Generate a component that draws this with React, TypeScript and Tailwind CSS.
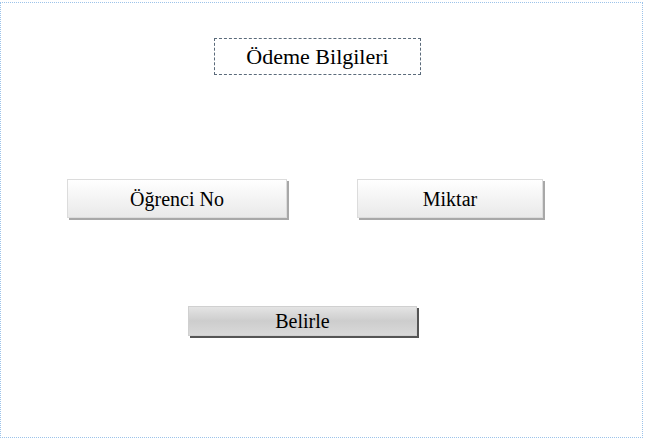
const App = () => {
    return (
        <div className="w-[646px] h-[439px] bg-white pt-[2px] font-['Liberation_Serif',serif] text-black">
            <div className="w-[643px] h-[436px] border border-dotted border-[#9cc3ea] flex flex-col">
                {/* title */}
                <div className="ml-[213px] mt-[35px] w-[207px] h-[37px] border border-dashed border-[#5a6a7a] flex items-center justify-center text-[22px]">
                    Ödeme Bilgileri
                </div>

                <div className="flex mt-[104px] ml-[66px] gap-[70px]">
                    <button className="w-[220px] h-[39px] border border-[#dcdcdc] bg-gradient-to-b from-[#ffffff] to-[#e9e9e9] shadow-[2px_2px_0_#a8a8a8] text-[20px]">
                        Öğrenci No
                    </button>
                    <button className="w-[186px] h-[39px] border border-[#dcdcdc] bg-gradient-to-b from-[#ffffff] to-[#e9e9e9] shadow-[2px_2px_0_#a8a8a8] text-[20px]">
                        Miktar
                    </button>
                </div>

                <button className="ml-[187px] mt-[88px] w-[229px] h-[30px] border border-[#d0d0d0] bg-gradient-to-b from-[#e4e4e4] via-[#cdcdcd] to-[#d9d9d9] shadow-[2px_2px_0_#555555] text-[20px] leading-none">
                    Belirle
                </button>
            </div>
        </div>
    );
};

export default App;
